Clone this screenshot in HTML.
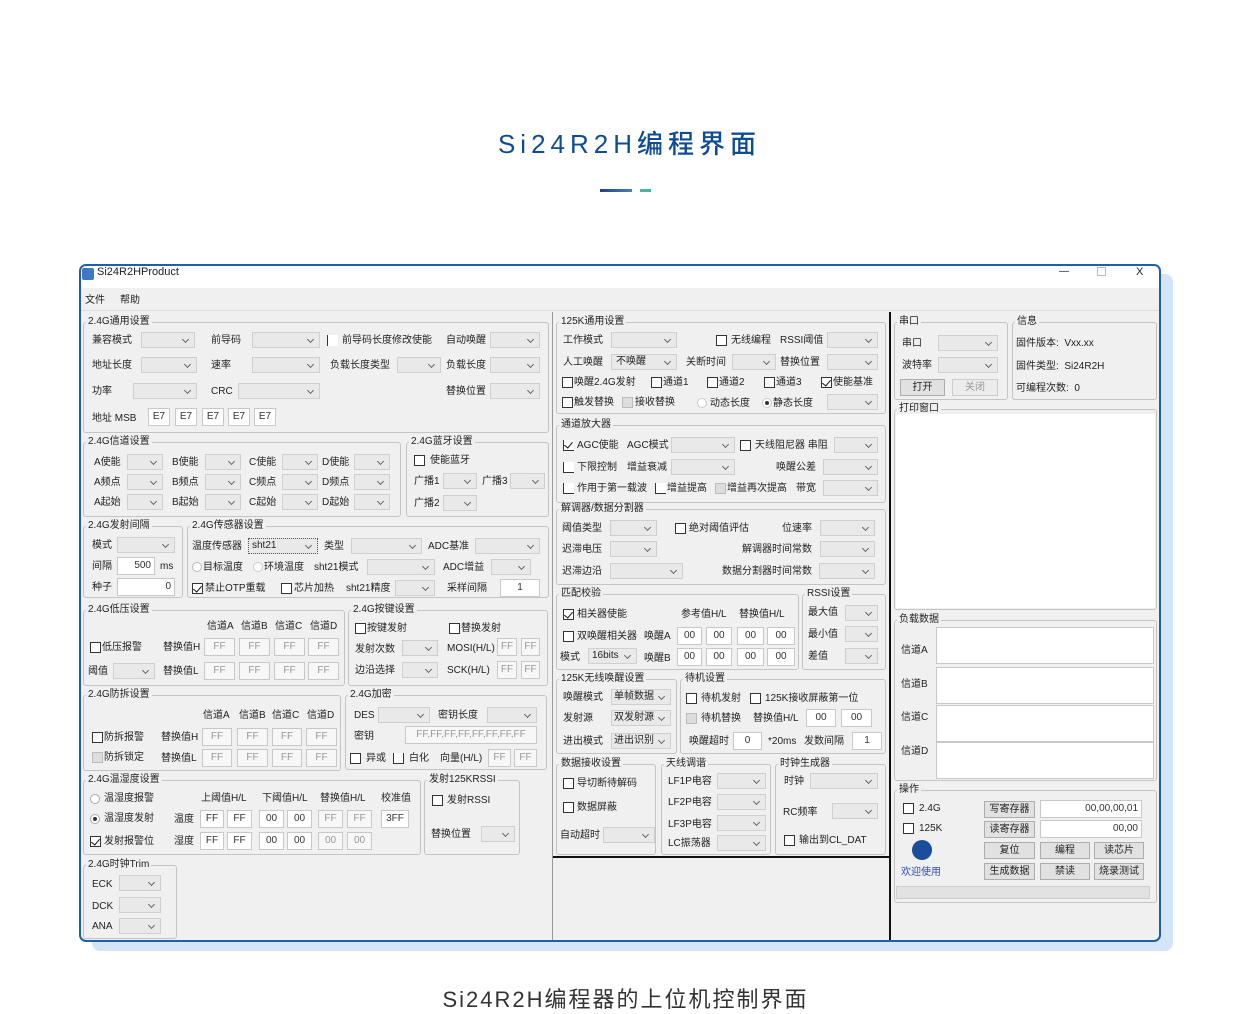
<!DOCTYPE html>
<html><head><meta charset="utf-8">
<style>
*{margin:0;padding:0;box-sizing:border-box}
body{width:1251px;height:1013px;background:#fff;position:relative;overflow:hidden;font-family:"Liberation Sans","Noto Sans CJK SC",sans-serif;color:#222}
div{position:absolute}
.h1{left:4px;width:1251px;top:124px;text-align:center;font-size:26px;letter-spacing:5px;color:#0f4c93;font-family:"Liberation Sans","Noto Sans CJK SC",sans-serif;font-weight:500}
.cap{left:0;width:1251px;top:982px;text-align:center;font-size:22px;letter-spacing:2px;color:#333}
.shadow{left:92px;top:274px;width:1081px;height:677px;background:#d3e5f6;border-radius:8px}
.win{left:79px;top:264px;width:1082px;height:678px;background:#f0f0f0;border:2px solid #1d5fa8;border-radius:7px;overflow:hidden}
.tb{left:0;top:0;width:1078px;height:22px;background:#fff}
.l{font-size:10px;line-height:14px;white-space:nowrap;color:#222;margin-top:1px}
.c .l,.g .l{margin-top:0}
.g{border:1px solid #c4c4c4;border-radius:3px}
.gl{font-size:10px;line-height:12px;background:#f0f0f0;padding:0 2px;top:-7px;left:2px;white-space:nowrap;color:#222}
.c{height:16px;background:#e9e9e9;border:1px solid #cfcfcf}
.c:after{content:"";position:absolute;right:6px;top:4px;width:4px;height:4px;border-right:1px solid #666;border-bottom:1px solid #666;transform:rotate(45deg)}
.t{height:18px;background:#fff;border:1px solid #c8c8c8;font-size:10px;line-height:16px;text-align:center;color:#333}
.t.d{color:#999;background:#f7f7f7}
.k{width:11px;height:11px;background:#fff;border:1px solid #333}
.k.n{background:#ddd;border-color:#bbb}
.k.x:after{content:"";position:absolute;left:2px;top:0;width:4px;height:7px;border-right:1.5px solid #111;border-bottom:1.5px solid #111;transform:rotate(40deg)}
.r{width:10px;height:10px;border-radius:50%;background:#fff;border:1px solid #aaa}
.r.x:after{content:"";position:absolute;left:2px;top:2px;width:4px;height:4px;border-radius:50%;background:#333}
.b{height:17px;background:#e1e1e1;border:1px solid #adadad;font-size:10px;line-height:15px;text-align:center}
.w{background:#fff;border:1px solid #c8c8c8}
</style></head><body>
<div class="h1">Si24R2H编程界面</div>
<div style="left:600px;top:189px;width:32px;height:3px;background:linear-gradient(90deg,#233f8f,#4a80b8)"></div>
<div style="left:640px;top:189px;width:11px;height:3px;background:#4fb0a8"></div>
<div class="shadow"></div>
<div class="win"><div class="tb"></div>
<div style="left:1px;top:2px;width:12px;height:12px;background:#3d78c0;border-radius:2px"></div>
</div>
<div class="l" style="left:97px;top:264px;font-size:11px">Si24R2HProduct</div>
<div class="l" style="left:1059px;top:264px">—</div>
<div style="left:1097px;top:267px;width:9px;height:9px;border:1px solid #bbb"></div>
<div class="l" style="left:1136px;top:264px;font-size:11px">X</div>
<div class="l" style="left:85px;top:293px">文件</div>
<div class="l" style="left:120px;top:293px">帮助</div>
<div style="left:81px;top:310px;width:1078px;height:1px;background:#ddd"></div>
<div style="left:552px;top:312px;width:1px;height:628px;background:#999"></div>
<div style="left:889px;top:312px;width:2px;height:628px;background:#111"></div>
<div style="left:553px;top:856px;width:337px;height:2px;background:#111"></div>

<div class="g" style="left:83px;top:322px;width:466px;height:111px"><div class="gl">2.4G通用设置</div></div>
<div class="l" style="left:92px;top:333px">兼容模式</div><div class="c" style="left:141px;top:332px;width:54px"></div>
<div class="l" style="left:211px;top:333px">前导码</div><div class="c" style="left:252px;top:332px;width:68px"></div>
<div class="k" style="left:327px;top:335px;border-top:none;border-right:none;border-bottom:none"></div>
<div class="l" style="left:342px;top:333px">前导码长度修改使能</div>
<div class="l" style="left:446px;top:333px">自动唤醒</div><div class="c" style="left:490px;top:332px;width:50px"></div>
<div class="l" style="left:92px;top:358px">地址长度</div><div class="c" style="left:141px;top:357px;width:56px"></div>
<div class="l" style="left:211px;top:358px">速率</div><div class="c" style="left:252px;top:357px;width:68px"></div>
<div class="l" style="left:330px;top:358px">负载长度类型</div><div class="c" style="left:397px;top:357px;width:44px"></div>
<div class="l" style="left:446px;top:358px">负载长度</div><div class="c" style="left:490px;top:357px;width:50px"></div>
<div class="l" style="left:92px;top:384px">功率</div><div class="c" style="left:133px;top:383px;width:64px"></div>
<div class="l" style="left:211px;top:384px">CRC</div><div class="c" style="left:238px;top:383px;width:82px"></div>
<div class="l" style="left:446px;top:384px">替换位置</div><div class="c" style="left:490px;top:383px;width:50px"></div>
<div class="l" style="left:92px;top:411px">地址 MSB</div>
<div class="t" style="left:148px;top:408px;width:22px">E7</div><div class="t" style="left:175px;top:408px;width:22px">E7</div><div class="t" style="left:202px;top:408px;width:22px">E7</div><div class="t" style="left:228px;top:408px;width:22px">E7</div><div class="t" style="left:254px;top:408px;width:22px">E7</div>

<div class="g" style="left:83px;top:442px;width:318px;height:75px"><div class="gl">2.4G信道设置</div></div>
<div class="l" style="left:94px;top:455px">A使能</div><div class="c" style="left:127px;top:454px;width:36px"></div>
<div class="l" style="left:172px;top:455px">B使能</div><div class="c" style="left:205px;top:454px;width:36px"></div>
<div class="l" style="left:249px;top:455px">C使能</div><div class="c" style="left:282px;top:454px;width:36px"></div>
<div class="l" style="left:322px;top:455px">D使能</div><div class="c" style="left:354px;top:454px;width:36px"></div>
<div class="l" style="left:94px;top:475px">A频点</div><div class="c" style="left:127px;top:474px;width:36px"></div>
<div class="l" style="left:172px;top:475px">B频点</div><div class="c" style="left:205px;top:474px;width:36px"></div>
<div class="l" style="left:249px;top:475px">C频点</div><div class="c" style="left:282px;top:474px;width:36px"></div>
<div class="l" style="left:322px;top:475px">D频点</div><div class="c" style="left:354px;top:474px;width:36px"></div>
<div class="l" style="left:94px;top:495px">A起始</div><div class="c" style="left:127px;top:494px;width:36px"></div>
<div class="l" style="left:172px;top:495px">B起始</div><div class="c" style="left:205px;top:494px;width:36px"></div>
<div class="l" style="left:249px;top:495px">C起始</div><div class="c" style="left:282px;top:494px;width:36px"></div>
<div class="l" style="left:322px;top:495px">D起始</div><div class="c" style="left:354px;top:494px;width:36px"></div>

<div class="g" style="left:406px;top:442px;width:143px;height:75px"><div class="gl">2.4G蓝牙设置</div></div>
<div class="k" style="left:414px;top:455px"></div><div class="l" style="left:430px;top:453px">使能蓝牙</div>
<div class="l" style="left:414px;top:474px">广播1</div><div class="c" style="left:443px;top:473px;width:34px"></div>
<div class="l" style="left:482px;top:474px">广播3</div><div class="c" style="left:510px;top:473px;width:35px"></div>
<div class="l" style="left:414px;top:496px">广播2</div><div class="c" style="left:443px;top:495px;width:34px"></div>

<div class="g" style="left:83px;top:526px;width:100px;height:72px"><div class="gl">2.4G发射间隔</div></div>
<div class="l" style="left:92px;top:538px">模式</div><div class="c" style="left:117px;top:537px;width:58px"></div>
<div class="l" style="left:92px;top:559px">间隔</div><div class="t" style="left:117px;top:557px;width:38px;text-align:right;padding-right:3px">500</div><div class="l" style="left:160px;top:559px">ms</div>
<div class="l" style="left:92px;top:580px">种子</div><div class="t" style="left:117px;top:578px;width:58px;text-align:right;padding-right:3px">0</div>

<div class="g" style="left:187px;top:526px;width:362px;height:72px"><div class="gl">2.4G传感器设置</div></div>
<div class="l" style="left:192px;top:539px">温度传感器</div><div class="c" style="left:248px;top:538px;width:70px;border:1px dotted #555"><div class="l" style="left:3px;top:0">sht21</div></div>
<div class="l" style="left:324px;top:539px">类型</div><div class="c" style="left:351px;top:538px;width:71px"></div>
<div class="l" style="left:428px;top:539px">ADC基准</div><div class="c" style="left:475px;top:538px;width:65px"></div>
<div class="r" style="left:192px;top:562px;border-color:#bbb"></div><div class="l" style="left:203px;top:560px">目标温度</div>
<div class="r" style="left:253px;top:562px;border-color:#ccc"></div><div class="l" style="left:264px;top:560px">环境温度</div>
<div class="l" style="left:314px;top:560px">sht21模式</div><div class="c" style="left:367px;top:559px;width:68px"></div>
<div class="l" style="left:443px;top:560px">ADC增益</div><div class="c" style="left:491px;top:559px;width:40px"></div>
<div class="k x" style="left:192px;top:583px"></div><div class="l" style="left:205px;top:581px">禁止OTP重载</div>
<div class="k" style="left:281px;top:583px"></div><div class="l" style="left:294px;top:581px">芯片加热</div>
<div class="l" style="left:346px;top:581px">sht21精度</div><div class="c" style="left:395px;top:580px;width:40px"></div>
<div class="l" style="left:447px;top:581px">采样间隔</div><div class="t" style="left:500px;top:579px;width:40px">1</div>

<div class="g" style="left:83px;top:610px;width:262px;height:76px"><div class="gl">2.4G低压设置</div></div>
<div class="l" style="left:207px;top:619px">信道A</div><div class="l" style="left:241px;top:619px">信道B</div><div class="l" style="left:275px;top:619px">信道C</div><div class="l" style="left:310px;top:619px">信道D</div>
<div class="k" style="left:90px;top:642px"></div><div class="l" style="left:102px;top:640px">低压报警</div>
<div class="l" style="left:163px;top:640px">替换值H</div>
<div class="t d" style="left:204px;top:638px;width:31px">FF</div><div class="t d" style="left:239px;top:638px;width:31px">FF</div><div class="t d" style="left:274px;top:638px;width:31px">FF</div><div class="t d" style="left:308px;top:638px;width:31px">FF</div>
<div class="l" style="left:88px;top:664px">阈值</div><div class="c" style="left:113px;top:663px;width:42px"></div>
<div class="l" style="left:163px;top:664px">替换值L</div>
<div class="t d" style="left:204px;top:662px;width:31px">FF</div><div class="t d" style="left:239px;top:662px;width:31px">FF</div><div class="t d" style="left:274px;top:662px;width:31px">FF</div><div class="t d" style="left:308px;top:662px;width:31px">FF</div>

<div class="g" style="left:348px;top:610px;width:200px;height:76px"><div class="gl">2.4G按键设置</div></div>
<div class="k" style="left:355px;top:623px"></div><div class="l" style="left:367px;top:621px">按键发射</div>
<div class="k" style="left:449px;top:623px"></div><div class="l" style="left:461px;top:621px">替换发射</div>
<div class="l" style="left:355px;top:642px">发射次数</div><div class="c" style="left:402px;top:640px;width:36px"></div>
<div class="l" style="left:447px;top:641px">MOSI(H/L)</div><div class="t d" style="left:497px;top:638px;width:20px">FF</div><div class="t d" style="left:521px;top:638px;width:19px">FF</div>
<div class="l" style="left:355px;top:663px">边沿选择</div><div class="c" style="left:402px;top:662px;width:36px"></div>
<div class="l" style="left:447px;top:663px">SCK(H/L)</div><div class="t d" style="left:497px;top:661px;width:20px">FF</div><div class="t d" style="left:521px;top:661px;width:19px">FF</div>

<div class="g" style="left:83px;top:695px;width:258px;height:76px"><div class="gl">2.4G防拆设置</div></div>
<div class="l" style="left:203px;top:708px">信道A</div><div class="l" style="left:239px;top:708px">信道B</div><div class="l" style="left:272px;top:708px">信道C</div><div class="l" style="left:307px;top:708px">信道D</div>
<div class="k" style="left:92px;top:732px"></div><div class="l" style="left:104px;top:730px">防拆报警</div>
<div class="l" style="left:161px;top:730px">替换值H</div>
<div class="t d" style="left:202px;top:728px;width:30px">FF</div><div class="t d" style="left:237px;top:728px;width:31px">FF</div><div class="t d" style="left:272px;top:728px;width:30px">FF</div><div class="t d" style="left:306px;top:728px;width:31px">FF</div>
<div class="k n" style="left:92px;top:752px"></div><div class="l" style="left:104px;top:750px">防拆锁定</div>
<div class="l" style="left:161px;top:751px">替换值L</div>
<div class="t d" style="left:202px;top:749px;width:30px">FF</div><div class="t d" style="left:237px;top:749px;width:31px">FF</div><div class="t d" style="left:272px;top:749px;width:30px">FF</div><div class="t d" style="left:306px;top:749px;width:31px">FF</div>

<div class="g" style="left:345px;top:695px;width:202px;height:75px"><div class="gl">2.4G加密</div></div>
<div class="l" style="left:354px;top:708px">DES</div><div class="c" style="left:378px;top:707px;width:52px"></div>
<div class="l" style="left:438px;top:708px">密钥长度</div><div class="c" style="left:487px;top:707px;width:50px"></div>
<div class="l" style="left:354px;top:729px">密钥</div><div class="t d" style="left:405px;top:726px;width:132px">FF,FF,FF,FF,FF,FF,FF,FF</div>
<div class="k" style="left:350px;top:753px"></div><div class="l" style="left:366px;top:751px">异或</div>
<div class="k" style="left:393px;top:753px;border-top:none"></div><div class="l" style="left:409px;top:751px">白化</div>
<div class="l" style="left:440px;top:751px">向量(H/L)</div><div class="t d" style="left:488px;top:749px;width:23px">FF</div><div class="t d" style="left:514px;top:749px;width:23px">FF</div>

<div class="g" style="left:83px;top:780px;width:338px;height:75px"><div class="gl">2.4G温湿度设置</div></div>
<div class="r" style="left:90px;top:794px"></div><div class="l" style="left:104px;top:791px">温湿度报警</div>
<div class="r x" style="left:90px;top:814px"></div><div class="l" style="left:104px;top:811px">温湿度发射</div>
<div class="k x" style="left:90px;top:836px"></div><div class="l" style="left:104px;top:834px">发射报警位</div>
<div class="l" style="left:201px;top:791px">上阈值H/L</div><div class="l" style="left:262px;top:791px">下阈值H/L</div><div class="l" style="left:320px;top:791px">替换值H/L</div><div class="l" style="left:381px;top:791px">校准值</div>
<div class="l" style="left:174px;top:812px">温度</div>
<div class="t" style="left:200px;top:810px;width:24px">FF</div><div class="t" style="left:227px;top:810px;width:25px">FF</div><div class="t" style="left:259px;top:810px;width:25px">00</div><div class="t" style="left:287px;top:810px;width:25px">00</div><div class="t d" style="left:318px;top:810px;width:25px">FF</div><div class="t d" style="left:347px;top:810px;width:25px">FF</div><div class="t" style="left:381px;top:810px;width:28px">3FF</div>
<div class="l" style="left:174px;top:834px">湿度</div>
<div class="t" style="left:200px;top:832px;width:24px">FF</div><div class="t" style="left:227px;top:832px;width:25px">FF</div><div class="t" style="left:259px;top:832px;width:25px">00</div><div class="t" style="left:287px;top:832px;width:25px">00</div><div class="t d" style="left:318px;top:832px;width:25px">00</div><div class="t d" style="left:347px;top:832px;width:25px">00</div>

<div class="g" style="left:424px;top:780px;width:96px;height:75px"><div class="gl">发射125KRSSI</div></div>
<div class="k" style="left:432px;top:795px"></div><div class="l" style="left:447px;top:793px">发射RSSI</div>
<div class="l" style="left:431px;top:827px">替换位置</div><div class="c" style="left:481px;top:826px;width:34px"></div>

<div class="g" style="left:83px;top:865px;width:94px;height:74px"><div class="gl">2.4G时钟Trim</div></div>
<div class="l" style="left:92px;top:877px">ECK</div><div class="c" style="left:119px;top:875px;width:42px"></div>
<div class="l" style="left:92px;top:899px">DCK</div><div class="c" style="left:119px;top:897px;width:42px"></div>
<div class="l" style="left:92px;top:919px">ANA</div><div class="c" style="left:119px;top:918px;width:42px"></div>

<div class="g" style="left:556px;top:322px;width:330px;height:92px"><div class="gl">125K通用设置</div></div>
<div class="l" style="left:563px;top:333px">工作模式</div><div class="c" style="left:611px;top:332px;width:66px"></div>
<div class="k" style="left:716px;top:335px"></div><div class="l" style="left:731px;top:333px">无线编程</div>
<div class="l" style="left:780px;top:333px">RSSI阈值</div><div class="c" style="left:827px;top:332px;width:51px"></div>
<div class="l" style="left:563px;top:355px">人工唤醒</div><div class="c" style="left:611px;top:354px;width:66px"><div class="l" style="left:4px;top:0">不唤醒</div></div>
<div class="l" style="left:686px;top:355px">关断时间</div><div class="c" style="left:732px;top:354px;width:44px"></div>
<div class="l" style="left:780px;top:355px">替换位置</div><div class="c" style="left:827px;top:354px;width:51px"></div>
<div class="k" style="left:562px;top:377px"></div><div class="l" style="left:574px;top:375px">唤醒2.4G发射</div>
<div class="k" style="left:651px;top:377px"></div><div class="l" style="left:663px;top:375px">通道1</div>
<div class="k" style="left:707px;top:377px"></div><div class="l" style="left:719px;top:375px">通道2</div>
<div class="k" style="left:764px;top:377px"></div><div class="l" style="left:776px;top:375px">通道3</div>
<div class="k x" style="left:821px;top:377px"></div><div class="l" style="left:833px;top:375px">使能基准</div>
<div class="k" style="left:562px;top:397px"></div><div class="l" style="left:574px;top:395px">触发替换</div>
<div class="k n" style="left:622px;top:397px"></div><div class="l" style="left:635px;top:395px">接收替换</div>
<div class="r" style="left:697px;top:398px;border-color:#ccc"></div><div class="l" style="left:710px;top:396px">动态长度</div>
<div class="r x" style="left:762px;top:398px;border-color:#ccc"></div><div class="l" style="left:773px;top:396px">静态长度</div>
<div class="c" style="left:827px;top:394px;width:51px"></div>

<div class="g" style="left:556px;top:425px;width:330px;height:78px"><div class="gl">通道放大器</div></div>
<div class="k x" style="left:563px;top:440px;border-top:none;border-right:none"></div><div class="l" style="left:577px;top:438px">AGC使能</div>
<div class="l" style="left:627px;top:438px">AGC模式</div><div class="c" style="left:671px;top:437px;width:64px"></div>
<div class="k" style="left:740px;top:440px"></div><div class="l" style="left:755px;top:438px">天线阻尼器 串阻</div><div class="c" style="left:834px;top:437px;width:44px"></div>
<div class="k" style="left:563px;top:462px;border-top:none;border-right:none"></div><div class="l" style="left:577px;top:460px">下限控制</div>
<div class="l" style="left:627px;top:460px">增益衰减</div><div class="c" style="left:671px;top:459px;width:64px"></div>
<div class="l" style="left:776px;top:460px">唤醒公差</div><div class="c" style="left:823px;top:459px;width:55px"></div>
<div class="k" style="left:563px;top:483px;border-top:none;border-right:none"></div><div class="l" style="left:577px;top:481px">作用于第一载波</div>
<div class="k" style="left:655px;top:483px;border-top:none;border-right:none"></div><div class="l" style="left:667px;top:481px">增益提高</div>
<div class="k n" style="left:715px;top:483px"></div><div class="l" style="left:727px;top:481px">增益再次提高</div>
<div class="l" style="left:796px;top:481px">带宽</div><div class="c" style="left:823px;top:480px;width:55px"></div>

<div class="g" style="left:556px;top:509px;width:330px;height:76px"><div class="gl">解调器/数据分割器</div></div>
<div class="l" style="left:562px;top:521px">阈值类型</div><div class="c" style="left:610px;top:520px;width:47px"></div>
<div class="k" style="left:675px;top:523px"></div><div class="l" style="left:689px;top:521px">绝对阈值评估</div>
<div class="l" style="left:782px;top:521px">位速率</div><div class="c" style="left:820px;top:520px;width:55px"></div>
<div class="l" style="left:562px;top:542px">迟滞电压</div><div class="c" style="left:610px;top:541px;width:47px"></div>
<div class="l" style="left:742px;top:542px">解调器时间常数</div><div class="c" style="left:820px;top:541px;width:55px"></div>
<div class="l" style="left:562px;top:564px">迟滞边沿</div><div class="c" style="left:610px;top:563px;width:73px"></div>
<div class="l" style="left:722px;top:564px">数据分割器时间常数</div><div class="c" style="left:819px;top:563px;width:56px"></div>

<div class="g" style="left:556px;top:594px;width:243px;height:76px"><div class="gl">匹配校验</div></div>
<div class="k x" style="left:563px;top:609px"></div><div class="l" style="left:577px;top:607px">相关器使能</div>
<div class="l" style="left:681px;top:607px">参考值H/L</div><div class="l" style="left:739px;top:607px">替换值H/L</div>
<div class="k" style="left:563px;top:631px"></div><div class="l" style="left:577px;top:629px">双唤醒相关器</div>
<div class="l" style="left:644px;top:629px">唤醒A</div>
<div class="t" style="left:677px;top:627px;width:25px">00</div><div class="t" style="left:706px;top:627px;width:26px">00</div><div class="t" style="left:737px;top:627px;width:27px">00</div><div class="t" style="left:767px;top:627px;width:28px">00</div>
<div class="l" style="left:560px;top:650px">模式</div><div class="c" style="left:588px;top:648px;width:49px"><div class="l" style="left:3px;top:0">16bits</div></div>
<div class="l" style="left:644px;top:651px">唤醒B</div>
<div class="t" style="left:677px;top:648px;width:25px">00</div><div class="t" style="left:706px;top:648px;width:26px">00</div><div class="t" style="left:737px;top:648px;width:27px">00</div><div class="t" style="left:767px;top:648px;width:28px">00</div>

<div class="g" style="left:802px;top:594px;width:84px;height:76px"><div class="gl">RSSI设置</div></div>
<div class="l" style="left:808px;top:605px">最大值</div><div class="c" style="left:845px;top:605px;width:33px"></div>
<div class="l" style="left:808px;top:627px">最小值</div><div class="c" style="left:845px;top:626px;width:33px"></div>
<div class="l" style="left:808px;top:649px">差值</div><div class="c" style="left:845px;top:648px;width:33px"></div>

<div class="g" style="left:556px;top:679px;width:121px;height:75px"><div class="gl">125K无线唤醒设置</div></div>
<div class="l" style="left:563px;top:690px">唤醒模式</div><div class="c" style="left:611px;top:689px;width:60px"><div class="l" style="left:2px;top:0">单帧数据</div></div>
<div class="l" style="left:563px;top:711px">发射源</div><div class="c" style="left:611px;top:710px;width:60px"><div class="l" style="left:2px;top:0">双发射源</div></div>
<div class="l" style="left:563px;top:734px">进出模式</div><div class="c" style="left:611px;top:733px;width:60px"><div class="l" style="left:2px;top:0">进出识别</div></div>

<div class="g" style="left:680px;top:679px;width:206px;height:75px"><div class="gl">待机设置</div></div>
<div class="k" style="left:686px;top:693px"></div><div class="l" style="left:701px;top:691px">待机发射</div>
<div class="k" style="left:750px;top:693px"></div><div class="l" style="left:765px;top:691px">125K接收屏蔽第一位</div>
<div class="k n" style="left:686px;top:713px"></div><div class="l" style="left:701px;top:711px">待机替换</div>
<div class="l" style="left:753px;top:711px">替换值H/L</div><div class="t" style="left:806px;top:709px;width:30px">00</div><div class="t" style="left:841px;top:709px;width:31px">00</div>
<div class="l" style="left:689px;top:734px">唤醒超时</div><div class="t" style="left:733px;top:732px;width:29px">0</div>
<div class="l" style="left:768px;top:734px">*20ms</div><div class="l" style="left:804px;top:734px">发数间隔</div><div class="t" style="left:852px;top:732px;width:30px">1</div>

<div class="g" style="left:556px;top:764px;width:100px;height:91px"><div class="gl">数据接收设置</div></div>
<div class="k" style="left:563px;top:778px"></div><div class="l" style="left:577px;top:776px">导切断待解码</div>
<div class="k" style="left:563px;top:802px"></div><div class="l" style="left:577px;top:800px">数据屏蔽</div>
<div class="l" style="left:560px;top:828px">自动超时</div><div class="c" style="left:603px;top:827px;width:52px"></div>

<div class="g" style="left:661px;top:764px;width:110px;height:91px"><div class="gl">天线调谐</div></div>
<div class="l" style="left:668px;top:774px">LF1P电容</div><div class="c" style="left:717px;top:773px;width:49px"></div>
<div class="l" style="left:668px;top:795px">LF2P电容</div><div class="c" style="left:717px;top:794px;width:49px"></div>
<div class="l" style="left:668px;top:817px">LF3P电容</div><div class="c" style="left:717px;top:815px;width:49px"></div>
<div class="l" style="left:668px;top:836px">LC振荡器</div><div class="c" style="left:717px;top:835px;width:49px"></div>

<div class="g" style="left:775px;top:764px;width:111px;height:91px"><div class="gl">时钟生成器</div></div>
<div class="l" style="left:784px;top:774px">时钟</div><div class="c" style="left:810px;top:773px;width:68px"></div>
<div class="l" style="left:783px;top:805px">RC频率</div><div class="c" style="left:832px;top:803px;width:46px"></div>
<div class="k" style="left:784px;top:835px"></div><div class="l" style="left:799px;top:833px">输出到CL_DAT</div>

<div class="g" style="left:894px;top:322px;width:114px;height:78px"><div class="gl">串口</div></div>
<div class="l" style="left:902px;top:336px">串口</div><div class="c" style="left:938px;top:335px;width:60px"></div>
<div class="l" style="left:902px;top:358px">波特率</div><div class="c" style="left:938px;top:357px;width:60px"></div>
<div class="b" style="left:900px;top:379px;width:45px">打开</div>
<div class="b" style="left:952px;top:379px;width:46px;color:#999;background:#ececec;border-color:#ccc">关闭</div>
<div class="g" style="left:1012px;top:322px;width:145px;height:78px"><div class="gl">信息</div></div>
<div class="l" style="left:1016px;top:336px">固件版本:&nbsp; Vxx.xx</div>
<div class="l" style="left:1016px;top:359px">固件类型:&nbsp; Si24R2H</div>
<div class="l" style="left:1016px;top:381px">可编程次数:&nbsp; 0</div>
<div class="g" style="left:894px;top:409px;width:263px;height:201px"><div class="gl">打印窗口</div></div>
<div class="w" style="left:896px;top:414px;width:259px;height:194px;border:none"></div>
<div class="g" style="left:894px;top:620px;width:263px;height:161px"><div class="gl">负载数据</div></div>
<div class="l" style="left:901px;top:643px">信道A</div><div class="w" style="left:936px;top:627px;width:218px;height:37px"></div>
<div class="l" style="left:901px;top:677px">信道B</div><div class="w" style="left:936px;top:667px;width:218px;height:37px"></div>
<div class="l" style="left:901px;top:710px">信道C</div><div class="w" style="left:936px;top:705px;width:218px;height:37px"></div>
<div class="l" style="left:901px;top:744px">信道D</div><div class="w" style="left:936px;top:742px;width:218px;height:37px"></div>
<div class="g" style="left:894px;top:790px;width:263px;height:113px"><div class="gl">操作</div></div>
<div class="k" style="left:903px;top:803px"></div><div class="l" style="left:919px;top:801px">2.4G</div>
<div class="k" style="left:903px;top:823px"></div><div class="l" style="left:919px;top:821px">125K</div>
<div style="left:912px;top:840px;width:20px;height:20px;border-radius:50%;background:#1a4d9c"></div>
<div class="l" style="left:901px;top:865px;color:#2b4fb0">欢迎使用</div>
<div class="b" style="left:984px;top:801px;width:51px">写寄存器</div>
<div class="t" style="left:1040px;top:800px;width:102px;text-align:right;padding-right:3px">00,00,00,01</div>
<div class="b" style="left:984px;top:821px;width:51px">读寄存器</div>
<div class="t" style="left:1040px;top:820px;width:102px;text-align:right;padding-right:3px">00,00</div>
<div class="b" style="left:984px;top:842px;width:51px">复位</div><div class="b" style="left:1040px;top:842px;width:50px">编程</div><div class="b" style="left:1094px;top:842px;width:50px">读芯片</div>
<div class="b" style="left:984px;top:863px;width:51px">生成数据</div><div class="b" style="left:1040px;top:863px;width:50px">禁读</div><div class="b" style="left:1094px;top:863px;width:50px">烧录测试</div>
<div style="left:896px;top:886px;width:254px;height:13px;background:#e2e2e2;border:1px solid #cfcfcf"></div>

<div class="cap">Si24R2H编程器的上位机控制界面</div>
</body></html>
